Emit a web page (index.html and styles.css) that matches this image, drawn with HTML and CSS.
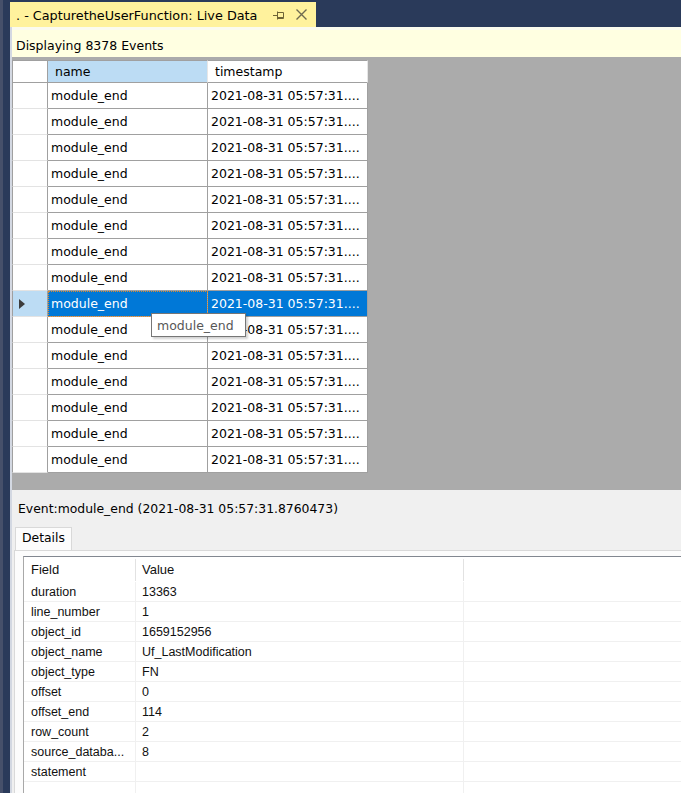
FILE: index.html
```html
<!DOCTYPE html>
<html>
<head>
<meta charset="utf-8">
<title>CapturetheUserFunction: Live Data</title>
<link rel="stylesheet" href="styles.css">
</head>
<body>
<div class="window">
  <div class="edge"></div>
  <div class="main">
    <div class="tabstrip">
      <div class="doctab">
        <span class="doctab-title">. - CapturetheUserFunction: Live Data</span>
        <svg class="pin" width="11" height="9" viewBox="0 0 11 9">
          <path d="M0 4.5H4M4.5 0.5V8.5M5 1.5H10.5V6.5H5M5 6.5H10.5V7.5H5" fill="none" stroke="#6e6436" stroke-width="1"/>
        </svg>
        <svg class="close" width="11" height="11" viewBox="0 0 11 11">
          <path d="M0.5 0.5L10.5 10.5M10.5 0.5L0.5 10.5" stroke="#6e6a50" stroke-width="1.4"/>
        </svg>
      </div>
    </div>
    <div class="panel">
      <div class="infobar">Displaying 8378 Events</div>
      <div class="gridarea">
        <div class="grid">
          <div class="gh corner"></div>
          <div class="gh sel">name</div>
          <div class="gh">timestamp</div>

          <div class="rh"></div><div class="gc">module_end</div><div class="gc">2021-08-31 05:57:31....</div>
          <div class="rh"></div><div class="gc">module_end</div><div class="gc">2021-08-31 05:57:31....</div>
          <div class="rh"></div><div class="gc">module_end</div><div class="gc">2021-08-31 05:57:31....</div>
          <div class="rh"></div><div class="gc">module_end</div><div class="gc">2021-08-31 05:57:31....</div>
          <div class="rh"></div><div class="gc">module_end</div><div class="gc">2021-08-31 05:57:31....</div>
          <div class="rh"></div><div class="gc">module_end</div><div class="gc">2021-08-31 05:57:31....</div>
          <div class="rh"></div><div class="gc">module_end</div><div class="gc">2021-08-31 05:57:31....</div>
          <div class="rh"></div><div class="gc">module_end</div><div class="gc">2021-08-31 05:57:31....</div>
          <div class="rh cur"><span class="arrow"></span></div><div class="gc selrow focus">module_end</div><div class="gc selrow">2021-08-31 05:57:31....</div>
          <div class="rh"></div><div class="gc">module_end</div><div class="gc">2021-08-31 05:57:31....</div>
          <div class="rh"></div><div class="gc">module_end</div><div class="gc">2021-08-31 05:57:31....</div>
          <div class="rh"></div><div class="gc">module_end</div><div class="gc">2021-08-31 05:57:31....</div>
          <div class="rh"></div><div class="gc">module_end</div><div class="gc">2021-08-31 05:57:31....</div>
          <div class="rh"></div><div class="gc">module_end</div><div class="gc">2021-08-31 05:57:31....</div>
          <div class="rh"></div><div class="gc">module_end</div><div class="gc">2021-08-31 05:57:31....</div>

          <div class="tooltip">module_end</div>
        </div>
      </div>
      <div class="detailpane">
        <div class="eventlabel">Event:module_end (2021-08-31 05:57:31.8760473)</div>
        <div class="tabs">
          <div class="tab">Details</div>
        </div>
        <div class="tabpage">
          <div class="dbox">
            <div class="dt">
              <div class="dh">Field</div><div class="dh">Value</div><div class="dh"></div>
              <div class="dc">duration</div><div class="dc">13363</div><div class="dc"></div>
              <div class="dc">line_number</div><div class="dc">1</div><div class="dc"></div>
              <div class="dc">object_id</div><div class="dc">1659152956</div><div class="dc"></div>
              <div class="dc">object_name</div><div class="dc">Uf_LastModification</div><div class="dc"></div>
              <div class="dc">object_type</div><div class="dc">FN</div><div class="dc"></div>
              <div class="dc">offset</div><div class="dc">0</div><div class="dc"></div>
              <div class="dc">offset_end</div><div class="dc">114</div><div class="dc"></div>
              <div class="dc">row_count</div><div class="dc">2</div><div class="dc"></div>
              <div class="dc">source_databa...</div><div class="dc">8</div><div class="dc"></div>
              <div class="dc">statement</div><div class="dc"></div><div class="dc"></div>
              <div class="dc"></div><div class="dc"></div><div class="dc"></div>
            </div>
          </div>
        </div>
      </div>
    </div>
  </div>
</div>
</body>
</html>
```

FILE: styles.css
```css
* { box-sizing: border-box; }

html, body {
  margin: 0;
  padding: 0;
  width: 681px;
  height: 793px;
  overflow: hidden;
  background: #2a3a5a;
  font-family: "DejaVu Sans", sans-serif;
  color: #000;
}

.window {
  display: flex;
  height: 793px;
}

.edge {
  width: 3px;
  background: #46506a;
}

.main {
  flex: 1;
  padding-left: 7px;
  display: flex;
  flex-direction: column;
  min-width: 0;
}

.tabstrip {
  height: 27px;
  display: flex;
  align-items: flex-end;
}

.doctab {
  width: 306px;
  height: 25px;
  background: #fff29d;
  display: flex;
  align-items: center;
  padding-left: 6px;
}

.doctab-title {
  font-size: 12.8px;
  color: #000;
  white-space: nowrap;
  width: 257px;
  padding-top: 2px;
}

.pin {
  margin-top: 1px;
}

.close {
  margin-left: 12px;
}

.panel {
  flex: 1;
  display: flex;
  flex-direction: column;
  border-left: 2px solid #d3d8e2;
  background: #f0f0f0;
  min-height: 0;
}

.infobar {
  height: 30px;
  background: #ffffe1;
  border-top: 3px solid #fbfbee;
  padding: 3px 0 0 4px;
  font-size: 12.5px;
  display: flex;
  align-items: center;
}

.gridarea {
  height: 433px;
  background: #ababab;
  padding-top: 3px;
}

.grid {
  position: relative;
  display: grid;
  grid-template-columns: 36px 160px 160px;
  grid-template-rows: 23px repeat(15, 26px);
  width: 356px;
  background: #fff;
  font-size: 12.5px;
}

.gh {
  background: #fff;
  border-top: 1px solid #a0a0a0;
  border-bottom: 1px solid #a0a0a0;
  border-right: 1px solid #e6e6e6;
  padding-left: 7px;
  display: flex;
  align-items: center;
  color: #000;
}

.gh.corner {
  border-left: 1px solid #a0a0a0;
  border-right: 1px solid #a0a0a0;
}

.gh.sel {
  background: #bcdcf4;
}

.gh:last-of-type {
  border-right: 1px solid #a0a0a0;
}

.rh {
  background: #fff;
  border-left: 1px solid #a0a0a0;
  border-right: 1px solid #a0a0a0;
  border-bottom: 1px solid #e3e3e3;
  display: flex;
  align-items: center;
  padding-left: 6px;
}

.rh.cur {
  background: #bcdcf4;
}

.arrow {
  width: 0;
  height: 0;
  border-top: 5px solid transparent;
  border-bottom: 5px solid transparent;
  border-left: 6px solid #3c3c3c;
}

.gc {
  border-right: 1px solid #a0a0a0;
  border-bottom: 1px solid #a0a0a0;
  padding-left: 3px;
  display: flex;
  align-items: center;
  white-space: nowrap;
  overflow: hidden;
}

.gc.selrow {
  background: #0078d7;
  color: #fff;
}

.gc.focus {
  outline: 1px dotted #e08a2c;
  outline-offset: -1px;
}

.tooltip {
  position: absolute;
  left: 139px;
  top: 253px;
  width: 95px;
  height: 24px;
  background: #fff;
  border: 1px solid #767676;
  color: #575757;
  font-size: 12.5px;
  display: flex;
  align-items: center;
  padding-left: 5px;
  box-shadow: 2px 2px 2px rgba(0, 0, 0, 0.18);
}

.detailpane {
  flex: 1;
  display: flex;
  flex-direction: column;
  min-height: 0;
}

.eventlabel {
  padding: 11px 0 0 6px;
  height: 37px;
  font-size: 12.4px;
  line-height: 16px;
}

.tabs {
  display: flex;
  padding-left: 3px;
  height: 23px;
}

.tab {
  width: 57px;
  height: 23px;
  border: 1px solid #d9d9d9;
  border-bottom: none;
  background: #fcfcfc;
  font-size: 12.4px;
  padding: 2px 0 0 6px;
}

.tabpage {
  flex: 1;
  margin-left: 2px;
  border-top: 1px solid #d9d9d9;
  border-left: 1px solid #d9d9d9;
  background: #fcfcfc;
  padding: 5px 0 0 8px;
  min-height: 0;
  overflow: hidden;
}

.dbox {
  border-top: 1px solid #828790;
  border-left: 1px solid #a8a8a8;
  background: #fff;
  height: 260px;
  font-family: "Liberation Sans", Arial, sans-serif;
  font-size: 12.5px;
  color: #111;
}

.dt {
  display: grid;
  grid-template-columns: 111px 328px 1fr;
  grid-template-rows: 25px;
  grid-auto-rows: 20px;
}

.dh {
  padding-left: 7px;
  padding-bottom: 1px;
  display: flex;
  align-items: center;
  font-size: 13px;
}

.dh + .dh {
  border-left: 1px solid #e2e2e2;
  padding-left: 6px;
  margin: 2px 0 1px;
}

.dc {
  border-bottom: 1px solid #f0f0f0;
  padding-left: 7px;
  display: flex;
  align-items: center;
  white-space: nowrap;
}

.dc:nth-child(3n+2), .dc:nth-child(3n) {
  border-left: 1px solid #f0f0f0;
  padding-left: 6px;
}
```
